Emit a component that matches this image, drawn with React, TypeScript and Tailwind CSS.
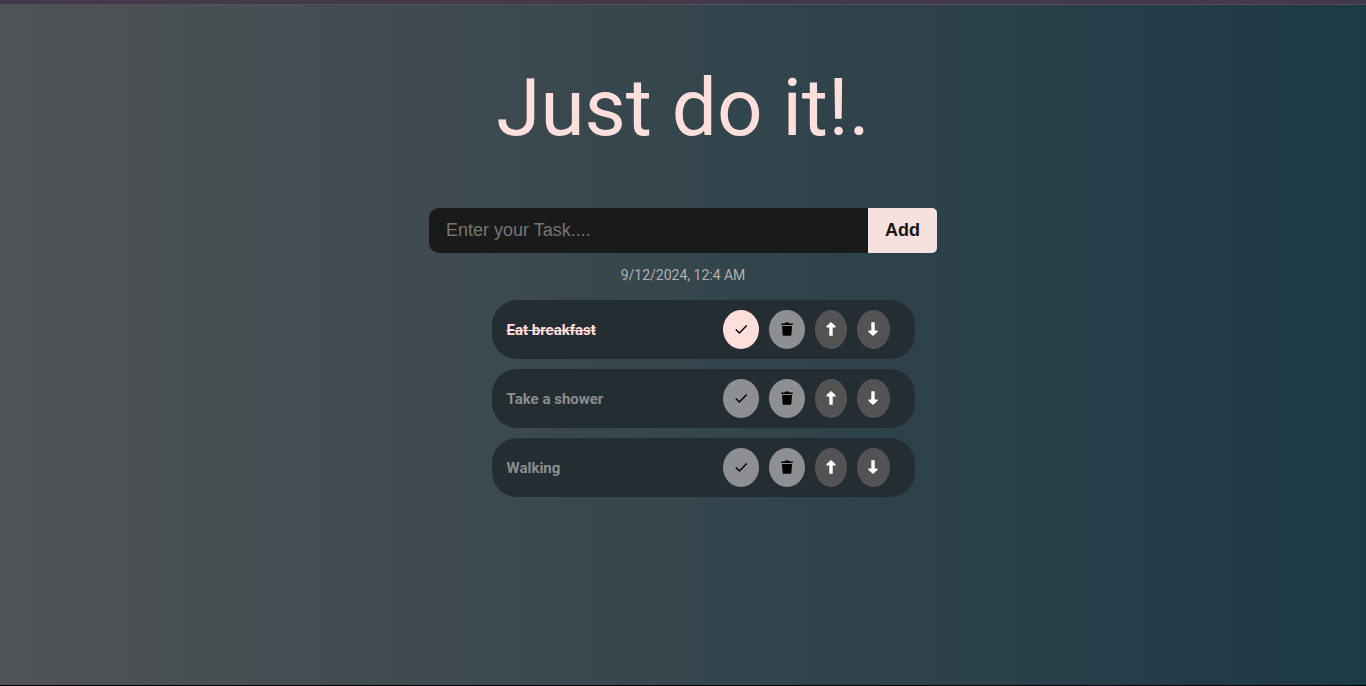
import { useState, type FormEvent } from "react";

type Task = { text: string; done: boolean };

const initialTasks: Task[] = [
  { text: "Eat breakfast", done: true },
  { text: "Take a shower", done: false },
  { text: "Walking", done: false },
];

function CheckIcon() {
  return (
    <svg viewBox="0 0 14 14" className="size-3.5" fill="none" stroke="currentColor" strokeWidth="1.4" aria-hidden="true">
      <path d="M1.8 7.4 5.4 11 12.7 3.4" />
    </svg>
  );
}

function TrashIcon() {
  return (
    <svg viewBox="0 0 14 14" className="size-3.5" fill="currentColor" aria-hidden="true">
      <path d="M1.2 1.4h3.4l.6-.8h3.6l.6.8h3.4v1.5H1.2zM2 4h10l-.6 8.8c0 .5-.4.9-.9.9h-7c-.5 0-.9-.4-.9-.9z" />
    </svg>
  );
}

function ArrowIcon({ down = false }: { down?: boolean }) {
  return (
    <svg viewBox="0 0 14 14" className="size-3.5" fill="currentColor" aria-hidden="true">
      <path d={down ? "M5.3.3h3.4v8.2h2.9v1.2L7 13.9 2.4 9.700V8.500h2.900z" : "M5.300 13.700h3.400V5.500h2.900V4.300L7 .1 2.400 4.300v1.200h2.900z"} />
    </svg>
  );
}

export default function App() {
  const [tasks, setTasks] = useState<Task[]>(initialTasks);
  const [draft, setDraft] = useState("");

  const add = (e: FormEvent) => {
    e.preventDefault();
    if (!draft.trim()) return;
    setTasks([...tasks, { text: draft.trim(), done: false }]);
    setDraft("");
  };
  const toggle = (i: number) => setTasks(tasks.map((t, n) => (n === i ? { ...t, done: !t.done } : t)));
  const remove = (i: number) => setTasks(tasks.filter((_, n) => n !== i));
  const move = (i: number, to: number) => {
    if (to < 0 || to >= tasks.length) return;
    const next = [...tasks];
    [next[i], next[to]] = [next[to], next[i]];
    setTasks(next);
  };

  return (
    <div className="flex min-h-screen flex-col border-b border-black bg-linear-to-r from-[#505355] via-[#35464d] to-[#1c3946] font-['Roboto',sans-serif]">
      <div className="h-[5px] border-b border-[#57505a] bg-[#43394b]" />
      <main className="flex flex-col items-center px-4 pt-14">
        <h1 className="text-[80px] leading-[94px] text-[#ffdfdb]">Just do it!.</h1>
        <form onSubmit={add} className="mt-[53px] flex h-[45px] w-full max-w-[508px] font-['Liberation_Sans',sans-serif] text-lg">
          <input
            aria-label="Task"
            value={draft}
            onChange={(e) => setDraft(e.target.value)}
            placeholder="Enter your Task...."
            className="min-w-0 flex-1 rounded-l-[10px] bg-[#191b1a] px-[17px] pb-0.5 text-[#f8e1de] outline-none placeholder:text-[#757575]"
          />
          <button type="submit" className="rounded-r-[5px] bg-[#f7e1de] px-[17px] pb-0.5 font-bold text-[#171717]">
            Add
          </button>
        </form>
        <p className="mt-3 text-sm leading-5 text-[#b4afaf]">9/12/2024, 12:4 AM</p>
        <ul className="mt-[15px] flex w-full max-w-[423px] translate-x-5 flex-col gap-2.5">
          {tasks.map((task, i) => (
            <li key={task.text} className="flex h-[59px] items-center gap-2.5 rounded-[25px] bg-[#242e32] pr-[25px] pl-[15px]">
              <span className={`flex-1 pt-px text-[15px] leading-6 font-bold ${task.done ? "text-[#ffdfdb] line-through" : "text-[#8a8d8e]"}`}>
                {task.text}
              </span>
              <button
                type="button"
                aria-label="Complete"
                onClick={() => toggle(i)}
                className={`flex h-[39px] w-9 items-center justify-center rounded-[50%] pb-px text-black ${task.done ? "bg-[#ffdfdb]" : "bg-[#8e8f93]"}`}
              >
                <CheckIcon />
              </button>
              <button
                type="button"
                aria-label="Delete"
                onClick={() => remove(i)}
                className="flex h-[39px] w-9 items-center justify-center rounded-[50%] bg-[#8e8f93] pb-px text-black"
              >
                <TrashIcon />
              </button>
              <button
                type="button"
                aria-label="Move up"
                onClick={() => move(i, i - 1)}
                className="flex h-[39px] w-8 items-center justify-center rounded-[50%] bg-[#535355] pb-px text-white"
              >
                <ArrowIcon />
              </button>
              <button
                type="button"
                aria-label="Move down"
                onClick={() => move(i, i + 1)}
                className="flex h-[39px] w-[33px] items-center justify-center rounded-[50%] bg-[#535355] pb-px text-white"
              >
                <ArrowIcon down />
              </button>
            </li>
          ))}
        </ul>
      </main>
    </div>
  );
}
